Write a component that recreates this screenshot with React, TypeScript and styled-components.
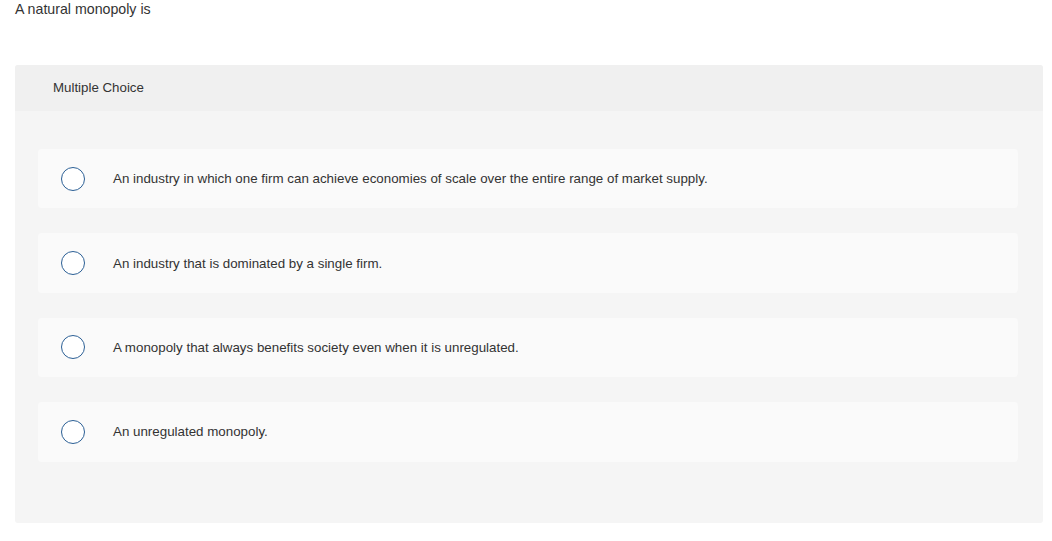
import React, { FC } from 'react';
import styled, { createGlobalStyle } from 'styled-components';

const GlobalStyle = createGlobalStyle`
  body {
    margin: 0;
    background: #fff;
    font-family: 'Liberation Sans', Arial, sans-serif;
    color: #333;
  }
`;

const Page = styled.div`
  padding: 0 9px 0 15px;
  width: 1028px;
`;

const Prompt = styled.p`
  margin: 0;
  font-size: 14.2px;
  line-height: 18px;
  color: #333;
`;

const Panel = styled.section`
  margin-top: 47px;
  background: #f5f5f5;
  border-radius: 3px;
  overflow: hidden;
`;

const PanelHeader = styled.header`
  height: 46px;
  display: flex;
  align-items: center;
  padding-left: 38px;
  padding-bottom: 1px;
  box-sizing: border-box;
  background: #f0f0f0;
  font-size: 13.3px;
  color: #333;
`;

const ChoiceList = styled.div`
  display: flex;
  flex-direction: column;
  gap: 25px;
  padding: 38px 25px 61px 23px;
`;

const ChoiceRow = styled.label`
  display: flex;
  align-items: center;
  height: 59.4px;
  background: #fafafa;
  border-radius: 4px;
  padding-left: 23px;
  cursor: pointer;
`;

const Radio = styled.span`
  width: 22px;
  height: 22px;
  border: 1.5px solid #2b5f95;
  border-radius: 50%;
  background: #fff;
  flex-shrink: 0;
`;

const ChoiceText = styled.span`
  margin-left: 28px;
  font-size: 13.35px;
  color: #333;
`;

const choices = [
  'An industry in which one firm can achieve economies of scale over the entire range of market supply.',
  'An industry that is dominated by a single firm.',
  'A monopoly that always benefits society even when it is unregulated.',
  'An unregulated monopoly.',
];

const App: FC = () => {
  return (
    <Page>
      <GlobalStyle />
      <Prompt>A natural monopoly is</Prompt>
      <Panel>
        <PanelHeader>Multiple Choice</PanelHeader>
        <ChoiceList>
          {choices.map((c) => (
            <ChoiceRow key={c}>
              <Radio />
              <ChoiceText>{c}</ChoiceText>
            </ChoiceRow>
          ))}
        </ChoiceList>
      </Panel>
    </Page>
  );
};

export default App;
